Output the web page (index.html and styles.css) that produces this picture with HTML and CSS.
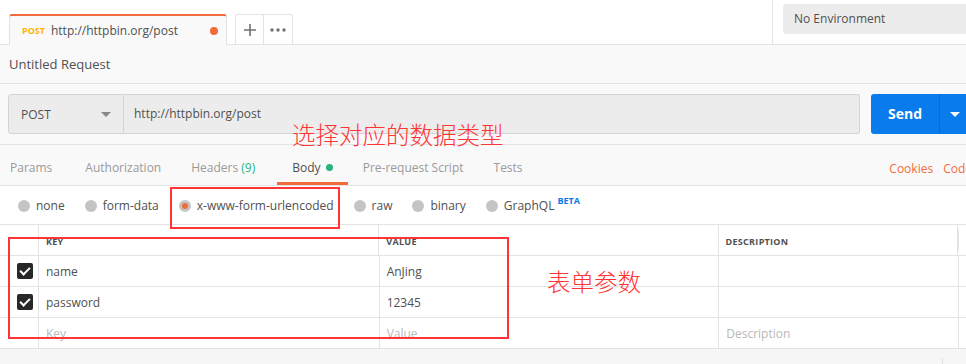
FILE: index.html
```html
<!DOCTYPE html>
<html lang="en">
<head>
  <meta charset="UTF-8">
  <title>Postman - POST http://httpbin.org/post</title>
  <link rel="stylesheet" href="styles.css">
</head>
<body>
  <!-- Top bar: request tabs + environment -->
  <header class="topbar">
    <div class="tab-strip">
      <div class="req-tab">
        <span class="req-tab-method">POST</span>
        <span class="req-tab-url">http://httpbin.org/post</span>
        <span class="req-tab-dot"></span>
      </div>
      <div class="tab-btn tab-add">
        <svg width="14" height="14" viewBox="0 0 14 14"><path d="M7 1v12M1 7h12" stroke="#707070" stroke-width="1.6"/></svg>
      </div>
      <div class="tab-btn tab-more">
        <svg width="16" height="4" viewBox="0 0 16 4"><circle cx="2" cy="2" r="1.7" fill="#707070"/><circle cx="8" cy="2" r="1.7" fill="#707070"/><circle cx="14" cy="2" r="1.7" fill="#707070"/></svg>
      </div>
    </div>
    <div class="env">
      <div class="env-select">No Environment</div>
    </div>
  </header>

  <div class="request-name">Untitled Request</div>

  <!-- URL bar -->
  <div class="url-row">
    <div class="method-select">
      <span>POST</span>
      <span class="caret caret-grey"></span>
    </div>
    <div class="url-input">http://httpbin.org/post</div>
    <div class="send-btn">
      <span class="send-label">Send</span>
      <span class="send-drop"><span class="caret caret-white"></span></span>
    </div>
  </div>

  <!-- Request sub tabs -->
  <nav class="sub-tabs">
    <div class="sub-tab-list">
      <span class="sub-tab tab-params">Params</span>
      <span class="sub-tab">Authorization</span>
      <span class="sub-tab tab-headers">Headers <span class="count">(9)</span></span>
      <span class="sub-tab active">Body <span class="green-dot"></span></span>
      <span class="sub-tab">Pre-request Script</span>
      <span class="sub-tab">Tests</span>
    </div>
    <div class="sub-links">
      <span>Cookies</span>
      <span>Code</span>
    </div>
  </nav>

  <!-- Body type radios -->
  <div class="body-types">
    <label class="radio"><span class="radio-circle"></span>none</label>
    <label class="radio"><span class="radio-circle"></span>form-data</label>
    <label class="radio"><span class="radio-circle checked"></span>x-www-form-urlencoded</label>
    <label class="radio"><span class="radio-circle"></span>raw</label>
    <label class="radio"><span class="radio-circle"></span>binary</label>
    <label class="radio"><span class="radio-circle"></span>GraphQL<sup class="beta">BETA</sup></label>
  </div>

  <!-- Key/value table -->
  <div class="kv-table">
    <div class="kv-row kv-head">
      <div class="cell cell-check"></div>
      <div class="cell cell-key">KEY</div>
      <div class="cell cell-value">VALUE</div>
      <div class="cell cell-desc">DESCRIPTION</div>
      <div class="cell cell-extra"></div>
    </div>
    <div class="kv-row">
      <div class="cell cell-check"><span class="checkbox"></span></div>
      <div class="cell cell-key">name</div>
      <div class="cell cell-value">AnJing</div>
      <div class="cell cell-desc"></div>
      <div class="cell cell-extra"></div>
    </div>
    <div class="kv-row">
      <div class="cell cell-check"><span class="checkbox"></span></div>
      <div class="cell cell-key">password</div>
      <div class="cell cell-value">12345</div>
      <div class="cell cell-desc"></div>
      <div class="cell cell-extra"></div>
    </div>
    <div class="kv-row placeholder">
      <div class="cell cell-check"></div>
      <div class="cell cell-key">Key</div>
      <div class="cell cell-value">Value</div>
      <div class="cell cell-desc">Description</div>
      <div class="cell cell-extra"></div>
    </div>
  </div>
  <div class="footer-strip">
    <span class="footer-line"></span>
  </div>

  <!-- Annotations drawn over the screenshot -->
  <div class="note note-type">选择对应的数据类型</div>
  <div class="note note-form">表单参数</div>
  <div class="mark mark-type"></div>
  <div class="mark mark-table"></div>
</body>
</html>
```

FILE: styles.css
```css
* {
  margin: 0;
  padding: 0;
  box-sizing: border-box;
}

body {
  font-family: 'Open Sans', 'Noto Sans', sans-serif;
  font-size: 12px;
  color: #505050;
  background: #f9f9f9;
  width: 966px;
  height: 364px;
  overflow: hidden;
  position: relative;
}

/* Top bar */
.topbar {
  display: flex;
  height: 45px;
  background: #fff;
  border-bottom: 1px solid #e3e3e3;
}

.tab-strip {
  flex: 1;
  display: flex;
  align-items: flex-end;
  padding-left: 9px;
}

.req-tab {
  width: 218px;
  height: 31px;
  margin-bottom: -1px;
  display: flex;
  align-items: center;
  padding: 0 8px 0 12px;
  background: #f9f9f9;
  border-top: 2px solid #f26b3a;
  border-left: 1px solid #e3e3e3;
  border-right: 1px solid #e3e3e3;
  border-radius: 3px 3px 0 0;
}

.req-tab-method {
  color: #ffb400;
  font-size: 9px;
  font-weight: 700;
  margin-right: 6px;
}

.req-tab-url {
  flex: 1;
}

.req-tab-dot {
  width: 8px;
  height: 8px;
  border-radius: 50%;
  background: #f26b3a;
}

.tab-btn {
  width: 29px;
  height: 30px;
  display: flex;
  align-items: center;
  justify-content: center;
  background: #fff;
  border: 1px solid #e3e3e3;
  border-bottom: none;
}

.tab-add {
  margin-left: 8px;
  border-radius: 3px 0 0 0;
}

.tab-more {
  border-left: none;
  border-radius: 0 3px 0 0;
}

.env {
  width: 194px;
  border-left: 1px solid #e3e3e3;
  padding: 4px 0 0 10px;
}

.env-select {
  height: 30px;
  background: #ececec;
  border-radius: 3px 0 0 3px;
  padding-left: 11px;
  line-height: 30px;
}

/* Request name */
.request-name {
  height: 39px;
  line-height: 38px;
  padding-left: 9px;
  font-size: 13px;
  border-bottom: 1px solid #e3e3e3;
}

/* URL row */
.url-row {
  display: flex;
  height: 61px;
  padding: 10px 0 10px 8px;
  border-bottom: 1px solid #e3e3e3;
}

.method-select {
  width: 116px;
  display: flex;
  align-items: center;
  justify-content: space-between;
  padding: 0 12px 0 12px;
  background: #ececec;
  border: 1px solid #d4d4d4;
  border-radius: 3px 0 0 3px;
}

.url-input {
  width: 736px;
  padding-left: 10px;
  line-height: 38px;
  background: #ececec;
  border: 1px solid #d4d4d4;
  border-left: none;
  border-radius: 0 3px 3px 0;
}

.send-btn {
  margin-left: 11px;
  flex: 1;
  display: flex;
  background: #097bed;
  border-radius: 3px 0 0 3px;
  color: #fff;
}

.send-label {
  width: 69px;
  font-size: 14px;
  font-weight: 700;
  text-align: center;
  line-height: 39px;
  border-right: 1px solid #0a6ad0;
}

.send-drop {
  flex: 1;
  display: flex;
  align-items: center;
  padding-left: 10px;
}

.caret {
  width: 0;
  height: 0;
  border-left: 5px solid transparent;
  border-right: 5px solid transparent;
}

.caret-grey {
  border-top: 5px solid #888;
}

.caret-white {
  border-top: 5px solid #fff;
}

/* Sub tabs */
.sub-tabs {
  display: flex;
  justify-content: space-between;
  height: 41px;
  border-bottom: 1px solid #e3e3e3;
}

.sub-tab-list {
  display: flex;
}

.sub-tab {
  padding: 9px 15px 0;
  line-height: 28px;
  color: #9a9a9a;
  border-bottom: 3px solid transparent;
}

.sub-tab.tab-params {
  padding-left: 10px;
  padding-right: 18px;
}

.sub-tab.tab-headers {
  padding-right: 22px;
}

.sub-tab.active {
  color: #505050;
  border-bottom-color: #f26b3a;
}

.count {
  color: #26b47f;
}

.green-dot {
  display: inline-block;
  width: 7px;
  height: 7px;
  border-radius: 50%;
  background: #26b47f;
  margin-left: 2px;
  vertical-align: 1px;
}

.sub-links {
  display: flex;
  gap: 10px;
  margin-right: -6px;
  padding-top: 10px;
  line-height: 28px;
  color: #f26b3a;
}

/* Body type radios */
.body-types {
  display: flex;
  align-items: center;
  height: 39px;
  padding: 1px 0 0 18px;
  background: #fff;
  border-bottom: 1px solid #e3e3e3;
}

.radio {
  display: flex;
  align-items: center;
  margin-right: 20px;
}

.radio-circle {
  width: 12px;
  height: 12px;
  border-radius: 50%;
  background: #c4c4c4;
  margin-right: 6px;
}

.radio-circle.checked {
  background: #f26b3a;
  border: 3px solid #c4c4c4;
}

.beta {
  color: #097bed;
  font-size: 9px;
  font-weight: 700;
  align-self: flex-start;
  margin-left: 3px;
  margin-top: -3px;
}

/* Key/value table */
.kv-table {
  background: #fff;
}

.kv-row {
  display: flex;
  height: 31px;
  border-bottom: 1px solid #e3e3e3;
}

.cell {
  display: flex;
  align-items: center;
  padding-left: 7px;
  border-right: 1px solid #e3e3e3;
}

.cell-check {
  width: 39px;
  padding-left: 17px;
}

.cell-key {
  width: 341px;
}

.cell-value {
  width: 340px;
}

.cell-desc {
  width: 240px;
}

.cell-extra {
  flex: 1;
  border-right: none;
}

.kv-head .cell {
  font-size: 9px;
  font-weight: 700;
  letter-spacing: 0.3px;
  padding-top: 2px;
}

.kv-head .cell-extra {
  border-left: 1px solid #e3e3e3;
  margin: 4px 0 4px 0;
}

.placeholder .cell {
  color: #b8b8b8;
}

.checkbox {
  position: relative;
  width: 16px;
  height: 16px;
  border-radius: 2px;
  background: #282828;
}

.checkbox::after {
  content: "";
  position: absolute;
  left: 5px;
  top: 2px;
  width: 4px;
  height: 8px;
  border: solid #fff;
  border-width: 0 2px 2px 0;
  transform: rotate(45deg);
}

.footer-strip {
  height: 16px;
  padding: 9px 0 0 942px;
  background: #f6f6f6;
}

.footer-line {
  display: block;
  width: 1px;
  height: 7px;
  background: #e0e0e0;
}

/* Red annotations */
.note {
  position: absolute;
  font-family: 'Noto Sans CJK SC', sans-serif;
  font-weight: 300;
  font-size: 23.5px;
  line-height: 1;
  color: #ff3434;
}

.note-type {
  left: 292px;
  top: 123px;
}

.note-form {
  left: 547px;
  top: 270px;
}

.mark {
  position: absolute;
  border: 2px solid #ff3434;
}

.mark-type {
  left: 170px;
  top: 187px;
  width: 170px;
  height: 42px;
}

.mark-table {
  left: 8px;
  top: 237px;
  width: 501px;
  height: 102px;
}
```
